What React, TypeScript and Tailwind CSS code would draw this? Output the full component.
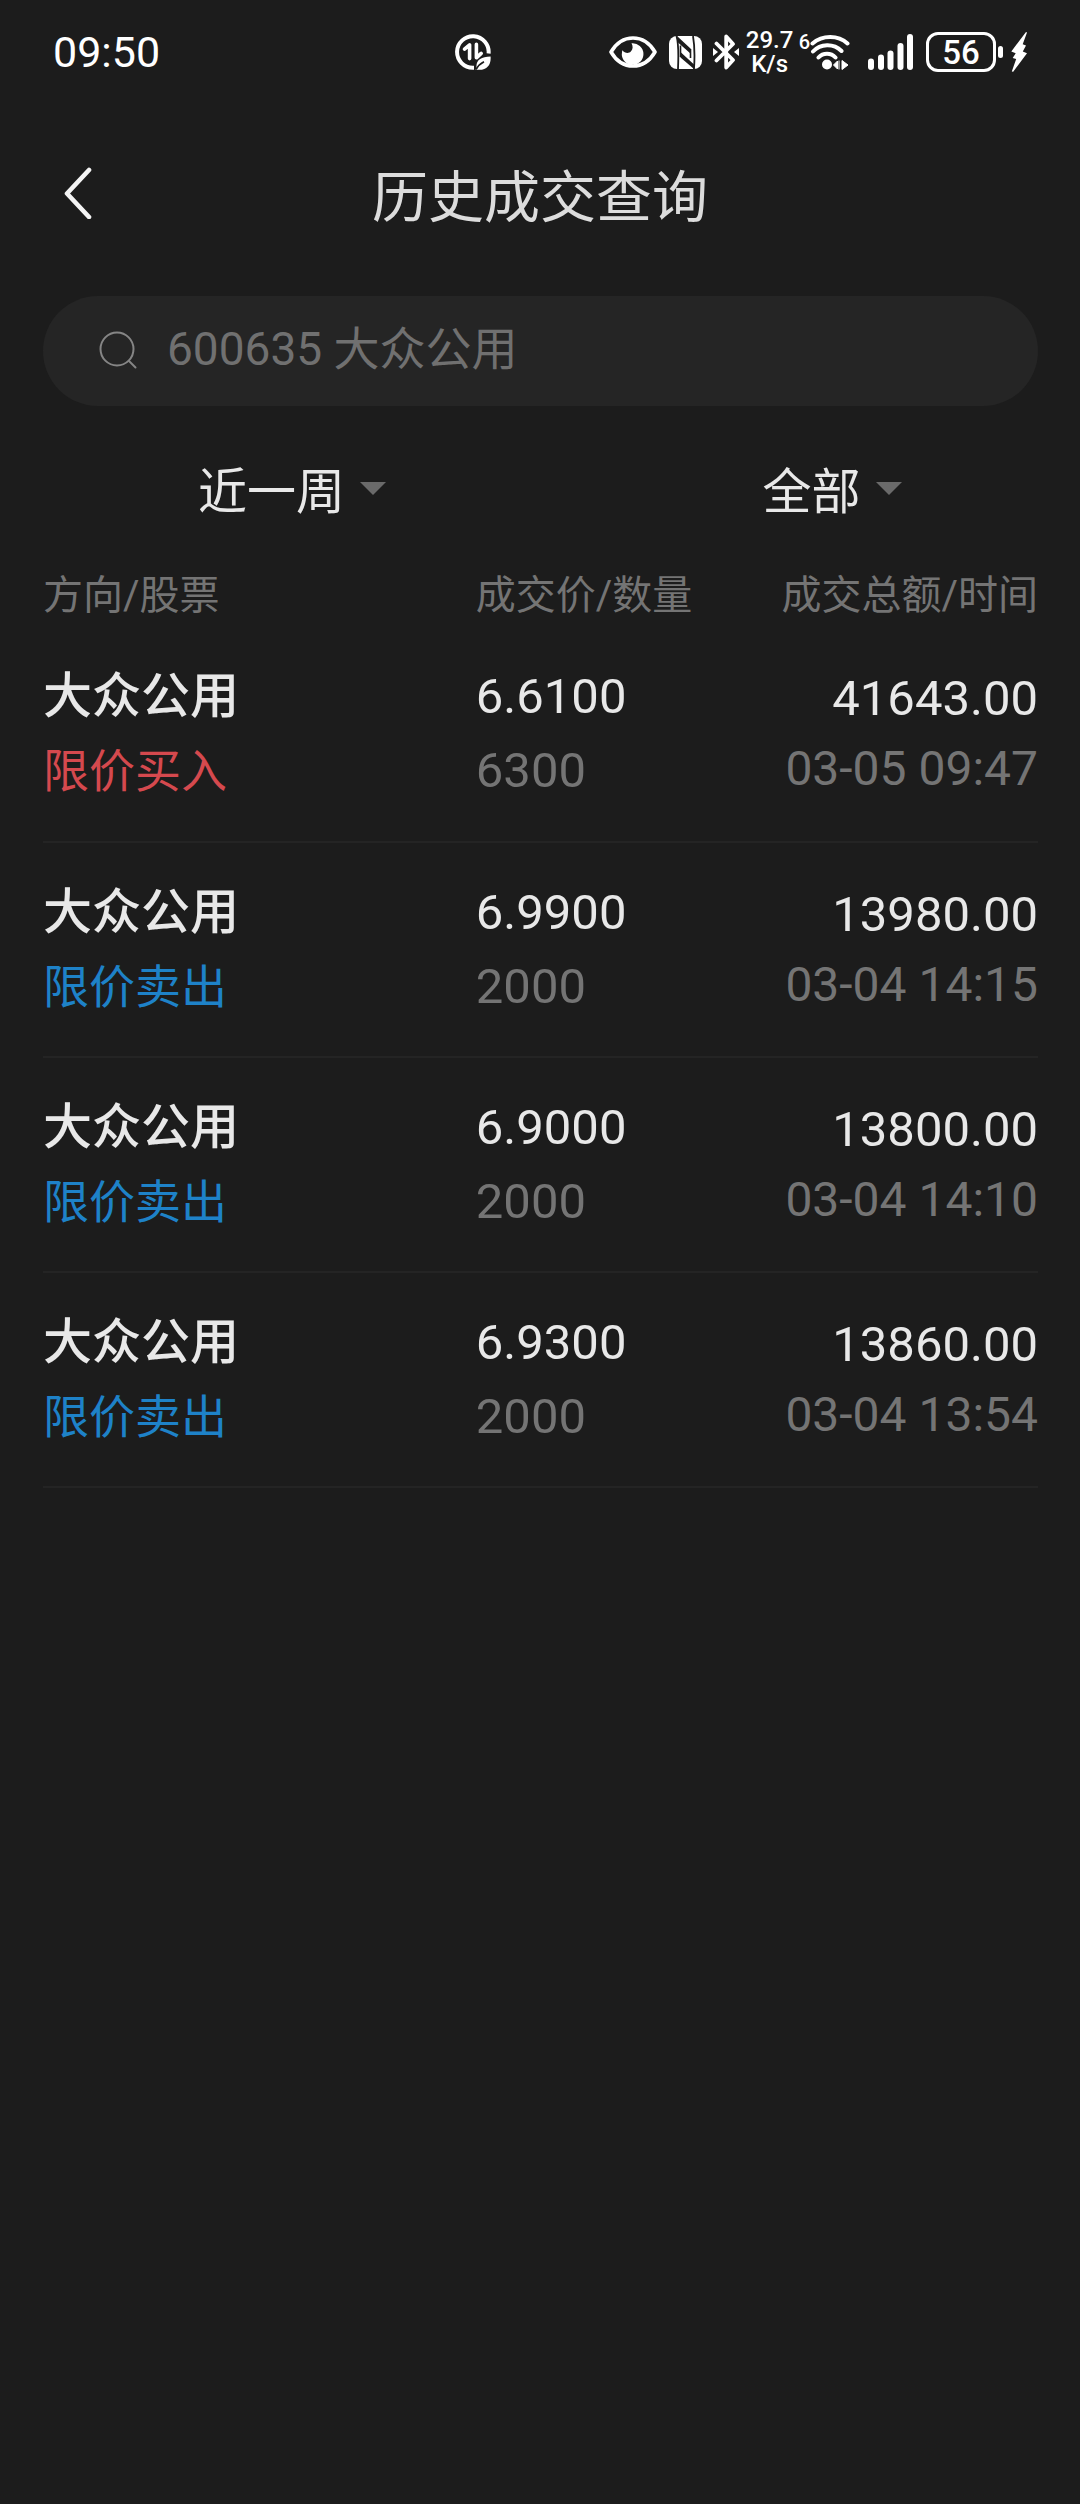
type Trade = {
  name: string;
  side: "buy" | "sell";
  price: string;
  quantity: string;
  total: string;
  time: string;
};

const trades: Trade[] = [
  { name: "大众公用", side: "buy", price: "6.6100", quantity: "6300", total: "41643.00", time: "03-05 09:47" },
  { name: "大众公用", side: "sell", price: "6.9900", quantity: "2000", total: "13980.00", time: "03-04 14:15" },
  { name: "大众公用", side: "sell", price: "6.9000", quantity: "2000", total: "13800.00", time: "03-04 14:10" },
  { name: "大众公用", side: "sell", price: "6.9300", quantity: "2000", total: "13860.00", time: "03-04 13:54" },
];

function DataSaverIcon() {
  return (
    <svg className="h-9 w-9" viewBox="0 0 36 36" fill="none" aria-hidden="true">
      <path d="M33.6 19.5A15.8 15.8 0 1 0 18 33.8h1" stroke="#fff" strokeWidth="4" />
      <path d="M9.5 15.2 14.6 11v13.6M21.4 10.4v13.4l4.8-4.4" stroke="#fff" strokeWidth="3.6" strokeLinecap="round" strokeLinejoin="round" />
      <path d="M35.6 22.6c.6 8-3.4 13.6-12.4 13.1l-2.6.3.9-2.6c-.6-7.3 4.5-10.6 14.1-10.8Z" fill="#fff" />
      <path d="M21 35.5c2.2-4 4.5-6 8-7.7" stroke="#1c1c1c" strokeWidth="1.6" />
    </svg>
  );
}

function EyeIcon() {
  return (
    <svg className="h-8 w-12" viewBox="0 0 48 32" fill="none" aria-hidden="true">
      <path d="M2 16C7 7.500 15 2 24 2s17 5.500 22 14c-5 8.500-13 14-22 14S7 24.500 2 16Z" stroke="#fff" strokeWidth="3.6" strokeLinejoin="round" />
      <path d="M22.500 7.300A10.800 10.800 0 1 1 13 16.200c0-.7.2-1.400.4-2 2.200 3 6 3.800 8.400 1.400 2.200-2.200 2.400-5.200.7-8.300Z" fill="#fff" />
    </svg>
  );
}

function NfcIcon() {
  return (
    <svg className="h-[33px] w-[33px]" viewBox="0 0 33 33" fill="none" aria-hidden="true">
      <rect width="33" height="33" rx="8" fill="#fff" />
      <path d="M7.500 0c2.300 8 2 22 1.500 33M24 0c1.600 9 1.600 24 1 33" stroke="#1c1c1c" strokeWidth="1.8" />
      <path d="M8 0 22 13v5L9 6.500ZM11.500 16 25 28.500V33L11.500 21.500Z" fill="#1c1c1c" />
      <path d="M11.500 9.500V21M21.500 13v9" stroke="#1c1c1c" strokeWidth="1.6" />
    </svg>
  );
}

function BluetoothIcon() {
  return (
    <svg className="h-9 w-[26px]" viewBox="0 0 26 36" fill="none" aria-hidden="true">
      <path d="m3.500 9.500 16.500 16.500-6.800 7.500v-31L20 10 3.500 26.500" stroke="#fff" strokeWidth="3.8" strokeLinejoin="round" strokeLinecap="round" />
      <path d="M0 14v8l5-4-5-4ZM26 14v8l-5-4 5-4Z" fill="#fff" />
    </svg>
  );
}

function WifiIcon() {
  return (
    <svg className="h-9 w-10" viewBox="0 0 40 36" fill="none" aria-hidden="true">
      <path d="M2.500 9.500c10-8.600 25.500-8.600 35 0M3 17.500c7.500-8 20.500-8.500 28.500-.5M8.500 23.500c4.500-5 12.500-5 17 0" stroke="#fff" strokeWidth="4" strokeLinecap="round" />
      <circle cx="17" cy="30.500" r="5" fill="#fff" />
      <path d="m23.500 31 4-4v8ZM29 26.500v9M32 26.500v9l6-4.500Z" fill="#fff" stroke="#fff" strokeWidth="1" />
    </svg>
  );
}

function SignalIcon() {
  return (
    <svg className="h-9 w-[46px]" viewBox="0 0 46 36" fill="#fff" aria-hidden="true">
      <rect x="0" y="24.5" width="6" height="11.5" rx="3" />
      <rect x="10" y="20.5" width="6" height="15.5" rx="3" />
      <rect x="19.5" y="16.5" width="6" height="19.5" rx="3" />
      <rect x="29.5" y="9" width="6" height="27" rx="3" />
      <rect x="39" y="0" width="6" height="36" rx="3" />
    </svg>
  );
}

function BoltIcon() {
  return (
    <svg className="h-10 w-4" viewBox="0 0 16 40" fill="#fff" aria-hidden="true">
      <path d="M15 0 .3 19.500l4.400 1.800-3 4.600 3.500 1.200L.8 39.500l1.400.3L16 21.200l-4.200-1.700 3.200-6.100-3.300-1.200L16 .5Z" />
    </svg>
  );
}

function StatusBar() {
  return (
    <div className="flex h-[104px] items-center pr-[53px] pl-[53px] text-white">
      <span className="flex-1 text-[43px] leading-[54px]">09:50</span>
      <div className="mr-[118px]">
        <DataSaverIcon />
      </div>
      <div className="flex items-center">
        <EyeIcon />
        <div className="ml-3">
          <NfcIcon />
        </div>
        <div className="ml-[11px]">
          <BluetoothIcon />
        </div>
        <div className="ml-2 flex w-[46px] flex-col items-center text-[24px] leading-6 font-medium">
          <span>29.7</span>
          <span>K/s</span>
        </div>
        <div className="ml-1.5 flex items-start">
          <span className="text-[20px] leading-4 font-medium">6</span>
          <WifiIcon />
        </div>
        <div className="ml-[18px]">
          <SignalIcon />
        </div>
        <div className="ml-3 flex h-10 w-[70px] items-center justify-center rounded-xl border-3 border-white text-[33px] leading-none font-medium">
          56
        </div>
        <div className="ml-0.5 h-3 w-[5px] rounded-full bg-white" />
        <div className="ml-2">
          <BoltIcon />
        </div>
      </div>
    </div>
  );
}

function Filter({ label, value }: { label: string; value: string }) {
  return (
    <label className="flex flex-1 items-center justify-center gap-3.5 pl-11">
      <select
        aria-label={label}
        defaultValue={value}
        className="appearance-none bg-transparent font-['Noto_Sans_CJK_SC',sans-serif] text-[49px] leading-[72px] text-[#e8e8e8] outline-none"
      >
        <option value={value}>{value}</option>
      </select>
      <svg className="h-[13px] w-[26px]" viewBox="0 0 26 13" fill="#6a6a6a" aria-hidden="true">
        <path d="M0 0h26L13 13Z" />
      </svg>
    </label>
  );
}

function TradeRow({ trade }: { trade: Trade }) {
  const buy = trade.side === "buy";
  return (
    <tr className="h-[215px] border-b-2 border-[#242424]">
      <td>
        <div className="text-[49px] leading-[74px] font-medium text-[#e8e8e8]">{trade.name}</div>
        <div className={buy ? "text-[46px] leading-[74px] text-[#d5494e]" : "text-[46px] leading-[74px] text-[#1e82c8]"}>
          {buy ? "限价买入" : "限价卖出"}
        </div>
      </td>
      <td>
        <div className="text-[49px] leading-[74px] text-[#e8e8e8]">{trade.price}</div>
        <div className="text-[49px] leading-[74px] text-[#747474]">{trade.quantity}</div>
      </td>
      <td className="text-right">
        <div className="text-[49px] leading-[70px] text-[#e8e8e8]">{trade.total}</div>
        <div className="text-[48px] leading-[70px] text-[#747474]">{trade.time}</div>
      </td>
    </tr>
  );
}

export default function App() {
  return (
    <div
      lang="zh-CN"
      className="min-h-screen bg-[#1c1c1c] font-['Roboto','Noto_Sans_CJK_SC',sans-serif]"
    >
      <StatusBar />
      <header className="grid h-[178px] grid-cols-[1fr_auto_1fr] items-center px-16">
        <button type="button" aria-label="返回" className="w-7">
          <svg className="h-[52px] w-7" viewBox="0 0 28 52" fill="none" aria-hidden="true">
            <path d="M25 3 3 26.500 25 50" stroke="#f4f4f4" strokeWidth="4.6" strokeLinecap="round" strokeLinejoin="round" />
          </svg>
        </button>
        <h1 className="font-['Noto_Sans_CJK_SC',sans-serif] text-[56px] leading-[72px] text-[#dcdcdc]">历史成交查询</h1>
      </header>
      <main className="pr-[42px] pl-[43px]">
        <form role="search" className="mt-3.5 flex h-[110px] items-center rounded-full bg-[#252525] pr-10 pl-14">
          <svg className="h-10 w-10" viewBox="0 0 40 40" fill="none" stroke="#858585" strokeWidth="2" strokeLinecap="round" aria-hidden="true">
            <circle cx="18" cy="18" r="16.5" />
            <path d="m30 30 6.500 6.500" />
          </svg>
          <input
            type="text"
            aria-label="股票"
            placeholder="600635 大众公用"
            className="mb-1 ml-7 h-16 min-w-0 flex-1 bg-transparent text-[46px] text-[#e8e8e8] outline-none placeholder:text-[#707070]"
          />
        </form>
        <div className="-mr-[42px] -ml-[43px] flex h-[158px] items-center pt-1.5">
          <Filter label="时间范围" value="近一周" />
          <Filter label="交易方向" value="全部" />
        </div>
        <table className="w-full table-fixed border-collapse">
          <thead>
            <tr className="h-[63px] text-left text-[40px] leading-[52px] text-[#747474]">
              <th className="w-[43.5%] font-normal">方向/股票</th>
              <th className="w-1/4 font-normal">成交价/数量</th>
              <th className="text-right font-normal">成交总额/时间</th>
            </tr>
          </thead>
          <tbody>
            {trades.map((trade) => (
              <TradeRow key={trade.time} trade={trade} />
            ))}
          </tbody>
        </table>
      </main>
    </div>
  );
}
